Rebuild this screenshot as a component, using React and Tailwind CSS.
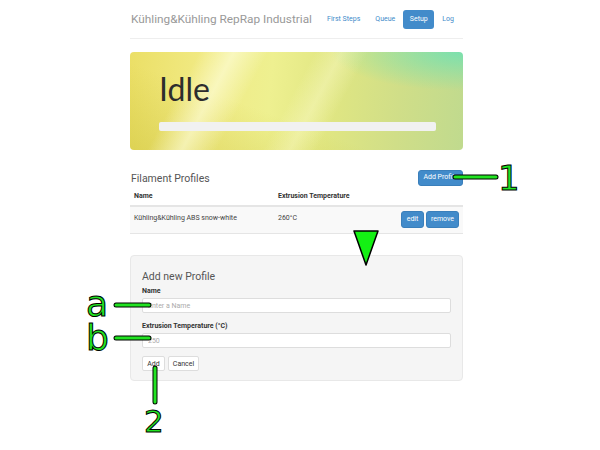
import React from 'react';

const Annotations = () => (
  <svg className="absolute inset-0 pointer-events-none" width="600" height="450" viewBox="0 0 600 450">
    <g strokeLinecap="round">
      <line x1="455" y1="177" x2="496" y2="177" stroke="#000" strokeWidth="5" />
      <line x1="455" y1="177" x2="496" y2="177" stroke="#22e322" strokeWidth="3" />
      <line x1="116" y1="305" x2="149" y2="305" stroke="#000" strokeWidth="5" />
      <line x1="116" y1="305" x2="149" y2="305" stroke="#22e322" strokeWidth="3" />
      <line x1="116" y1="338" x2="149" y2="338" stroke="#000" strokeWidth="5" />
      <line x1="116" y1="338" x2="149" y2="338" stroke="#22e322" strokeWidth="3" />
      <line x1="155" y1="368" x2="155" y2="402" stroke="#000" strokeWidth="5" />
      <line x1="155" y1="368" x2="155" y2="402" stroke="#22e322" strokeWidth="3" />
    </g>
    <polygon points="354,231 378,231 366,265" fill="#14f014" stroke="#000" strokeWidth="1.5" strokeLinejoin="round" />
    <g fontFamily="'DejaVu Sans', sans-serif" fill="#22e322" stroke="#000" strokeWidth="1">
      <text x="498" y="190" fontSize="34">1</text>
      <text x="86" y="316" fontSize="36">a</text>
      <text x="86" y="350" fontSize="36">b</text>
      <text x="144" y="432" fontSize="31">2</text>
    </g>
  </svg>
);

const Btn = ({ children, className = '' }) => (
  <button className={`rounded-[3px] bg-[#428bca] text-white text-[7px] leading-none border border-[#3a7fbb] whitespace-nowrap ${className}`}>
    {children}
  </button>
);

export default function App() {
  return (
    <div className="relative w-[600px] h-[450px] bg-white font-['Roboto',sans-serif] overflow-hidden">
      <div className="ml-[130px] w-[333px]">
        {/* header */}
        <div className="pt-[10px] pb-[9px] border-b border-[#eee] flex items-center justify-between whitespace-nowrap">
          <h1 className="text-[11.8px] text-[#999] pl-[1px] leading-[19px]">Kühling&amp;Kühling RepRap Industrial</h1>
          <nav className="flex items-center text-[7px] text-[#428bca]">
            <span className="px-[7px]">First Steps</span>
            <span className="px-[8px]">Queue</span>
            <span className="h-[19px] w-[31px] rounded-[3px] bg-[#428bca] text-white flex items-center justify-center">Setup</span>
            <span className="pl-[8px] pr-[9px]">Log</span>
          </nav>
        </div>

        {/* jumbotron */}
        <div className="mt-[13px] h-[98px] rounded-[4px] pl-[29px] pt-[20px] bg-[radial-gradient(ellipse_at_100%_0%,rgba(110,225,180,0.85),rgba(110,225,180,0)_28%),linear-gradient(118deg,rgba(255,255,255,0)_18%,rgba(255,255,225,0.6)_27%,rgba(255,255,255,0)_36%,rgba(255,255,255,0)_48%,rgba(250,250,200,0.45)_55%,rgba(255,255,255,0)_62%),linear-gradient(200deg,rgba(255,255,255,0)_60%,rgba(200,190,50,0.4)_100%),linear-gradient(95deg,#ebdf66_0%,#f1ea84_22%,#eef090_42%,#e0e682_60%,#d0de88_80%,#c0da8e_100%)]">
          <div className="text-[32px] leading-[34px] text-[#2d2d2d] font-['Lato',sans-serif]">Idle</div>
          <div className="mt-[16px] w-[277px] h-[9px] rounded-[2px] bg-[#f1f1f1]" />
        </div>

        {/* filament profiles */}
        <div className="mt-[19px] flex items-center justify-between">
          <h3 className="text-[10.5px] text-[#555] pl-[1px] pt-[2px]">Filament Profiles</h3>
          <Btn className="w-[45px] h-[16px]">Add Profile</Btn>
        </div>
        <table className="w-full text-[7px] text-[#333] border-collapse">
          <thead>
            <tr className="border-b-2 border-[#e5e5e5]">
              <th className="text-left font-bold pl-[4px] h-[19px] w-[148px]">Name</th>
              <th className="text-left font-bold">Extrusion Temperature</th>
              <th />
            </tr>
          </thead>
          <tbody>
            <tr className="bg-[#f9f9f9] border-b border-[#e5e5e5] h-[28px] align-top">
              <td className="pl-[4px] pt-[6px] text-[#444]">Kühling&amp;Kühling ABS snow-white</td>
              <td className="pt-[6px] text-[#444]">260°C</td>
              <td className="pt-[4px] pr-[4px]">
                <div className="flex justify-end gap-[2px]">
                  <Btn className="w-[23px] h-[17px]">edit</Btn>
                  <Btn className="w-[33px] h-[17px]">remove</Btn>
                </div>
              </td>
            </tr>
          </tbody>
        </table>

        {/* add new profile */}
        <div className="mt-[21px] h-[126px] bg-[#f5f5f5] border border-[#e8e8e8] rounded-[4px] px-[11px] pt-[14px]">
          <h4 className="text-[10.5px] text-[#555] leading-[14px]">Add new Profile</h4>
          <label className="block text-[7px] font-bold text-[#333] mt-[2px] leading-[10px]">Name</label>
          <input
            className="mt-[2px] block w-[309px] h-[15px] bg-white border border-[#ddd] rounded-[2px] px-[5px] text-[7px] placeholder:text-[#aaa] outline-none"
            placeholder="Enter a Name"
          />
          <label className="block text-[7px] font-bold text-[#333] mt-[8px] leading-[10px]">Extrusion Temperature (°C)</label>
          <input
            className="mt-[2px] block w-[309px] h-[15px] bg-white border border-[#ddd] rounded-[2px] px-[5px] text-[7px] placeholder:text-[#aaa] outline-none"
            placeholder="250"
          />
          <div className="mt-[8px] flex gap-[3px]">
            <button className="w-[23px] h-[15px] bg-white border border-[#ddd] rounded-[2px] text-[7px] text-[#333]">Add</button>
            <button className="w-[31px] h-[15px] bg-white border border-[#ddd] rounded-[2px] text-[7px] text-[#333]">Cancel</button>
          </div>
        </div>
      </div>
      <Annotations />
    </div>
  );
}
